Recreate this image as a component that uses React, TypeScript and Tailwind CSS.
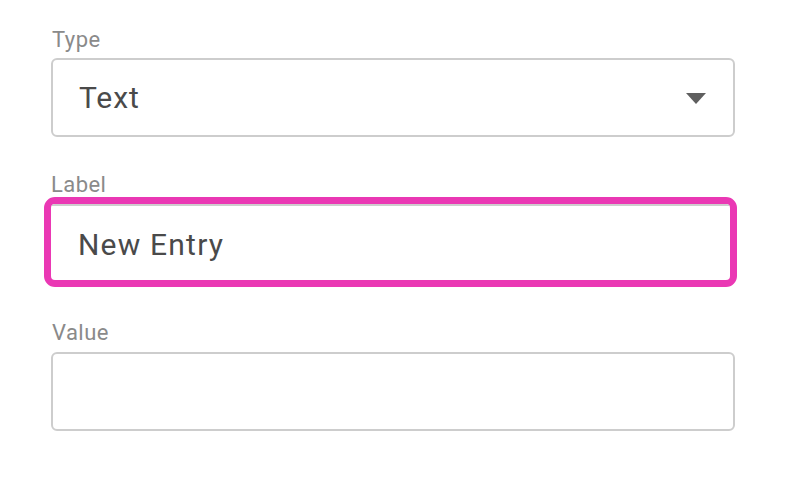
export default function App() {
  return (
    <div className="w-[790px] h-[490px] bg-white font-['Roboto',sans-serif] pl-[51px] pt-[28px]">
      <div className="w-[684px] flex flex-col">
        <label className="block text-[22px] leading-[24px] tracking-[0.02em] text-[#8a8a8a] pl-[1px]">Type</label>
        <div className="mt-[6px] h-[79px] border-2 border-[#cdcdcd] rounded-[6px] flex items-center justify-between pl-[26px] pr-[27px]">
          <span className="text-[30px] text-[#4a4a4a] leading-none tracking-[0.03em]">Text</span>
          <svg width="20" height="11" viewBox="0 0 20 11" className="mt-[1px]">
            <polygon points="0,0 20,0 10,11" fill="#5f5f5f" />
          </svg>
        </div>

        <label className="block mt-[36px] text-[22px] leading-[24px] tracking-[0.02em] text-[#8a8a8a]">Label</label>
        <div className="ml-[-7px] w-[693px] h-[90px] border-[7px] border-[#ea38b4] rounded-[11px] overflow-hidden">
          <div className="h-full border-t-2 border-[#cdcdcd] flex items-center pl-[27px] pt-[3px]">
            <span className="text-[30px] text-[#4a4a4a] leading-none tracking-[0.04em]">New Entry</span>
          </div>
        </div>

        <label className="block mt-[34px] text-[22px] leading-[24px] tracking-[0.02em] text-[#8a8a8a] pl-[1px]">Value</label>
        <div className="mt-[7px] h-[79px] border-2 border-[#cdcdcd] rounded-[6px]" />
      </div>
    </div>
  );
}
